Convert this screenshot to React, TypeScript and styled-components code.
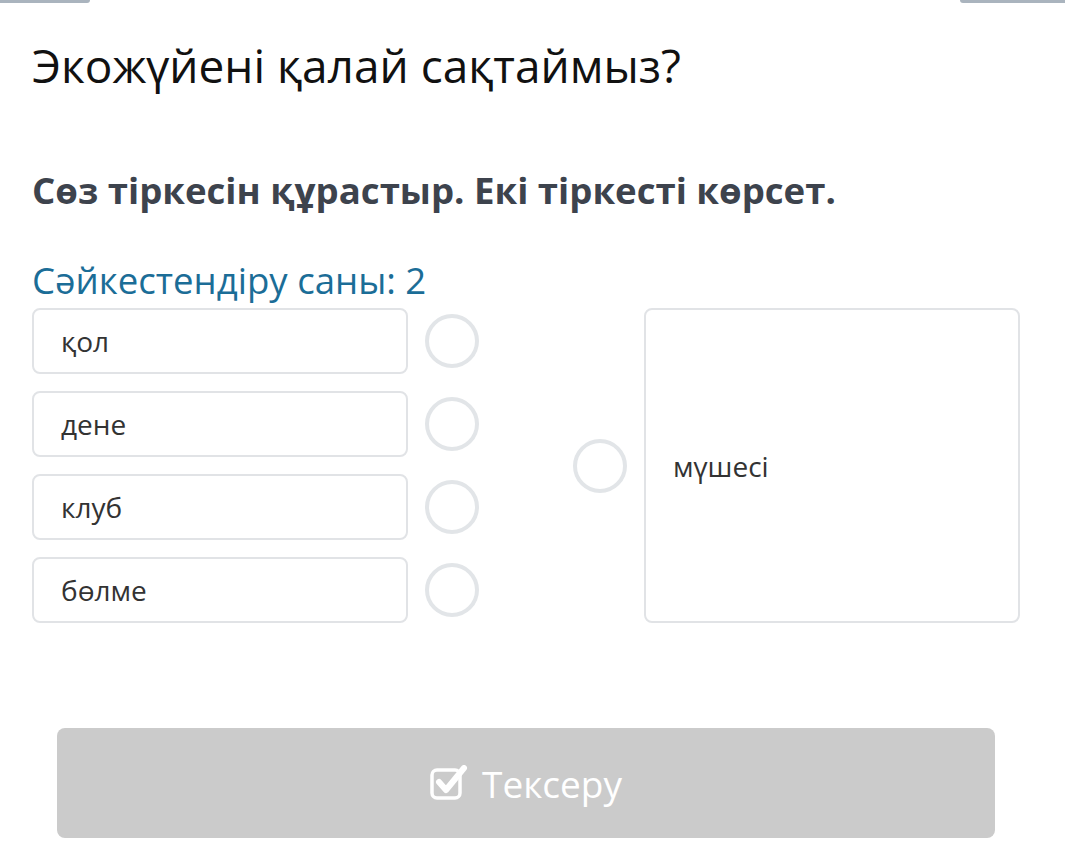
import styled, { createGlobalStyle } from "styled-components";

const GlobalStyle = createGlobalStyle`
  body {
    margin: 0;
    background: #ffffff;
    font-family: "Open Sans", "Noto Sans", sans-serif;
  }
`;

const Page = styled.div`
  width: 1065px;
  height: 864px;
  overflow: hidden;
  display: flex;
  flex-direction: column;
`;

const TopBar = styled.div`
  display: flex;
  justify-content: space-between;
  height: 3px;
`;

const TopTab = styled.div<{ side: "left" | "right" }>`
  width: ${(p) => (p.side === "left" ? "90px" : "105px")};
  height: 3px;
  background: #aab4be;
  border-radius: ${(p) => (p.side === "left" ? "0 0 6px 0" : "0 0 0 6px")};
`;

const Content = styled.div`
  padding: 0 32px;
  display: flex;
  flex-direction: column;
`;

const Title = styled.h1`
  margin: 32px 0 0;
  font-size: 46px;
  font-weight: 400;
  line-height: 60px;
  color: #111111;
`;

const Instruction = styled.h2`
  margin: 70px 0 0;
  font-size: 36.6px;
  font-weight: 700;
  line-height: 50px;
  color: #3d434d;
`;

const Count = styled.div`
  margin-top: 42px;
  font-size: 36.6px;
  line-height: 46px;
  color: #1b6d97;
`;

const Board = styled.div`
  display: flex;
  gap: 94px;
  margin-top: 5px;
`;

const LeftColumn = styled.div`
  display: flex;
  flex-direction: column;
  gap: 17px;
`;

const Row = styled.div`
  display: flex;
  align-items: center;
  gap: 17px;
`;

const Card = styled.div<{ tall?: boolean }>`
  box-sizing: border-box;
  width: 376px;
  height: ${(p) => (p.tall ? "315px" : "66px")};
  border: 2px solid #e1e3e6;
  border-radius: 8px;
  background: #ffffff;
  display: flex;
  align-items: center;
  padding-left: 27px;
  font-size: 28px;
  color: #333333;
`;

const Dot = styled.div`
  box-sizing: border-box;
  width: 54px;
  height: 54px;
  border-radius: 50%;
  border: 4px solid #e2e5e8;
  flex-shrink: 0;
`;

const RightGroup = styled.div`
  display: flex;
  align-items: center;
  gap: 17px;
`;

const CheckButton = styled.button`
  margin: 105px 70px 0 57px;
  height: 110px;
  border: none;
  border-radius: 8px;
  background: #cbcbcb;
  color: #ffffff;
  font-family: "Open Sans", "Noto Sans", sans-serif;
  font-size: 37px;
  display: flex;
  align-items: center;
  justify-content: center;
  gap: 14px;
`;

const leftItems = ["қол", "дене", "клуб", "бөлме"];

function CheckIcon() {
  return (
    <svg width="38" height="36" viewBox="0 0 38 36" fill="none">
      <rect x="2" y="5" width="28" height="28" rx="5" stroke="#ffffff" strokeWidth="3.5" />
      <path d="M9 17 L16 25 L34 3" stroke="#ffffff" strokeWidth="6" strokeLinecap="round" strokeLinejoin="round" />
    </svg>
  );
}

export default function App() {
  return (
    <Page>
      <GlobalStyle />
      <TopBar>
        <TopTab side="left" />
        <TopTab side="right" />
      </TopBar>
      <Content>
        <Title>Экожүйені қалай сақтаймыз?</Title>
        <Instruction>Сөз тіркесін құрастыр. Екі тіркесті көрсет.</Instruction>
        <Count>Сәйкестендіру саны: 2</Count>
        <Board>
          <LeftColumn>
            {leftItems.map((item) => (
              <Row key={item}>
                <Card>{item}</Card>
                <Dot />
              </Row>
            ))}
          </LeftColumn>
          <RightGroup>
            <Dot />
            <Card tall>мүшесі</Card>
          </RightGroup>
        </Board>
      </Content>
      <CheckButton>
        <CheckIcon />
        Тексеру
      </CheckButton>
    </Page>
  );
}
